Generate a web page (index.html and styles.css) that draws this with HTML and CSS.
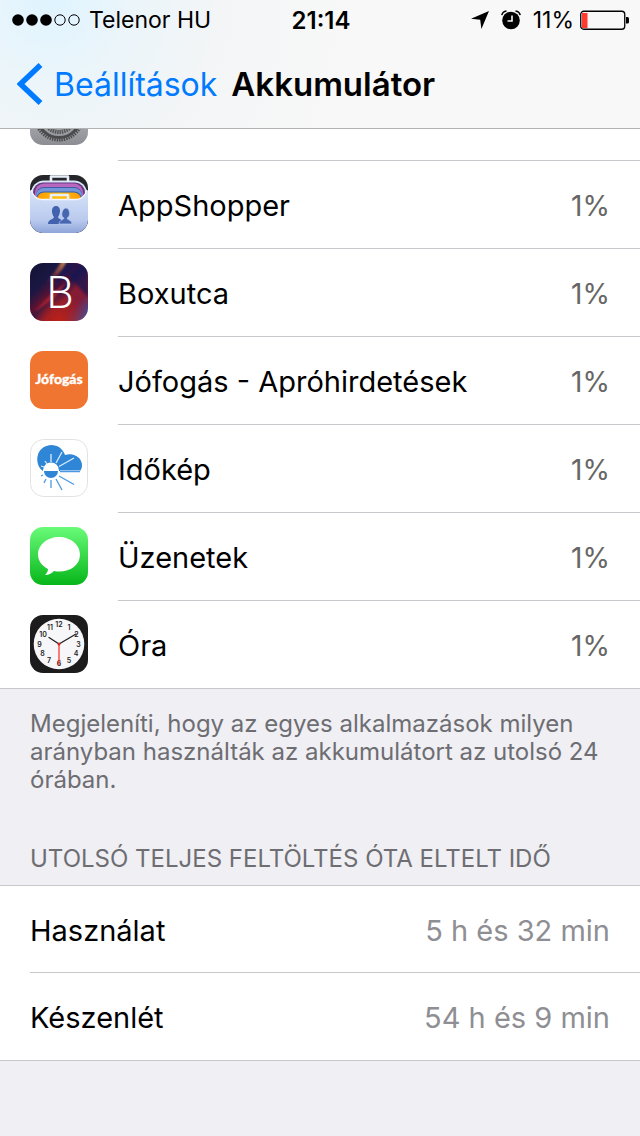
FILE: index.html
```html
<!DOCTYPE html>
<html lang="hu">
<head>
<meta charset="utf-8">
<meta name="viewport" content="width=device-width, initial-scale=1">
<title>Akkumulátor</title>
<link rel="stylesheet" href="styles.css">
</head>
<body>
<header class="top">
  <div class="status">
    <div class="status-left">
      <svg class="signal" width="68" height="12" viewBox="0 0 68 12" aria-hidden="true">
        <circle cx="6" cy="6" r="5.8"/><circle cx="20" cy="6" r="5.8"/><circle cx="34" cy="6" r="5.8"/>
        <g fill="none" stroke="#000"><circle cx="48" cy="6" r="5.200"/><circle cx="62" cy="6" r="5.200"/></g>
      </svg>
      <span>Telenor HU</span>
    </div>
    <time class="clock">21:14</time>
    <div class="status-right">
      <svg width="18" height="18" viewBox="0 0 18 18" aria-hidden="true"><path d="M18 0 10.4 18 9.2 8.8 0 7.8Z"/></svg>
      <svg class="alarm" width="20" height="20" viewBox="0 0 20 20" aria-hidden="true">
        <circle cx="10" cy="10.5" r="8.8"/>
        <path d="M.8 5.2Q1.500 1.500 5.500 1M19.200 5.200Q18.500 1.500 14.500 1" fill="none" stroke="#000" stroke-width="1.500"/>
        <path d="M11 5.500V11H6.500" fill="none" stroke="#f8f8f8" stroke-width="1.600"/>
      </svg>
      <span>11%</span>
      <svg class="battery" width="50" height="20" viewBox="0 0 50 20" aria-hidden="true">
        <rect x=".75" y="1.250" width="44" height="18" rx="3" fill="none" stroke="#000" stroke-width="1.300"/>
        <rect x="2" y="3" width="5.500" height="15" fill="#ff3b30"/>
        <path d="M46 7h1.500q1.500 0 1.500 1.500v3.500q0 1.500-1.500 1.500H46Z"/>
      </svg>
    </div>
  </div>
  <nav class="nav">
    <a class="back" href="#">
      <svg width="26" height="42" viewBox="0 0 26 42" aria-hidden="true"><path d="M23.500 2 3.500 21l20 19" fill="none" stroke="#007aff" stroke-width="5.500"/></svg>
      <span>Beállítások</span>
    </a>
    <h1 class="title">Akkumulátor</h1>
  </nav>
</header>
<main>
  <ul class="list apps">
    <li class="row clipped">
      <svg class="icon" viewBox="0 0 58 58" aria-hidden="true">
        <defs><linearGradient id="gs" x2="0" y2="1"><stop stop-color="#d5d6d9"/><stop offset=".7" stop-color="#a0a2a7"/><stop offset="1" stop-color="#8b8d93"/></linearGradient></defs>
        <rect width="58" height="58" rx="13" fill="url(#gs)"/>
        <circle cx="29" cy="29" r="24" fill="none" stroke="#4b4b4d" stroke-width="3" stroke-dasharray="1.400 1"/>
        <circle cx="29" cy="29" r="21.500" fill="none" stroke="#4b4b4d" stroke-width="3"/>
        <circle cx="29" cy="29" r="16" fill="none" stroke="#555659" stroke-width="4" stroke-dasharray="1.500 .8"/>
      </svg>
      <div class="cell"></div>
    </li>
    <li class="row">
      <svg class="icon" viewBox="0 0 58 58" aria-hidden="true">
        <defs>
          <linearGradient id="as" x2="0" y2="1"><stop stop-color="#d7e3f8"/><stop offset=".7" stop-color="#b9caee"/><stop offset="1" stop-color="#8fa5d9"/></linearGradient>
          <linearGradient id="ao"><stop stop-color="#ff9a05"/><stop offset=".5" stop-color="#ffc20a"/><stop offset="1" stop-color="#ff9a05"/></linearGradient>
          <clipPath id="ac"><rect width="58" height="58" rx="13"/></clipPath>
        </defs>
        <g clip-path="url(#ac)">
          <rect width="58" height="58" fill="#252629"/>
          <rect x="1" y="5.500" width="56" height="52" rx="13" fill="#d9e6f6"/>
          <rect x="3" y="7.500" width="52" height="30" rx="10" fill="#653783"/>
          <rect x="5" y="8.500" width="48" height="25" rx="9" fill="#b967bf"/>
          <rect x="6" y="12" width="46" height="20" rx="8" fill="#405da9"/>
          <rect x="6" y="13" width="46" height="20" rx="8" fill="#7595d9"/>
          <rect x="6" y="16.500" width="46" height="17" rx="8" fill="#315cab"/>
          <rect x="7" y="17.500" width="44" height="16" rx="7" fill="url(#ao)"/>
          <path d="M0 15 3 19Q6 24.500 12 24.500H46Q52 24.500 55 19L58 15V45a13 13 0 0 1-13 13H13A13 13 0 0 1 0 45Z" fill="url(#as)"/>
          <path d="M1 15 3 19Q6 24.500 12 24.500H46Q52 24.500 55 19L57 15" fill="none" stroke="#f3f7ff" stroke-width="1.400"/>
          <path d="M21 7V1.500h17V7M21 25v-5h17v5" fill="none" stroke="#e8effb" stroke-width="2.600" stroke-linejoin="round"/>
          <path d="M18 49c0-5 5-4 6-7-3-4-3-11 2-11s5 7 2 11c1 3 6 2 6 7Z" fill="#4262ae"/>
          <path d="M29 49c0-4 5-4 5-6-4-1-2-10 2-10s5 9 1 10c0 2 5 2 5 6Z" fill="#4867b1" stroke="#b9caee" stroke-width=".7"/>
        </g>
      </svg>
      <div class="cell"><span>AppShopper</span><span class="percent">1%</span></div>
    </li>
    <li class="row">
      <svg class="icon" viewBox="0 0 58 58" aria-hidden="true">
        <defs>
          <linearGradient id="bx" x2="1" y2="1"><stop stop-color="#151235"/><stop offset=".28" stop-color="#1a1743"/><stop offset=".43" stop-color="#5a1232"/><stop offset=".5" stop-color="#291646"/><stop offset=".62" stop-color="#861c32"/><stop offset=".75" stop-color="#811c3a"/><stop offset="1" stop-color="#355aad"/></linearGradient>
          <radialGradient id="br" cx=".5" cy="1" r=".5"><stop stop-color="#bb2116"/><stop offset="1" stop-color="#bb2116" stop-opacity="0"/></radialGradient>
          <linearGradient id="by" x1="1" x2="0" y2="1"><stop stop-color="#d99850"/><stop offset="1" stop-color="#a9233a" stop-opacity="0"/></linearGradient>
          <filter id="bb"><feGaussianBlur stdDeviation="1"/></filter>
          <clipPath id="bc"><rect width="58" height="58" rx="13"/></clipPath>
        </defs>
        <g clip-path="url(#bc)">
          <rect width="58" height="58" fill="url(#bx)"/>
          <path d="M34 0H58V34L38 12 22 28Z" fill="#151752" opacity=".75" filter="url(#bb)"/>
          <path d="M32-2h5Q29 15 14 21Q24 11 32-2" fill="url(#by)" filter="url(#bb)"/>
          <path d="M38 18 20 32 4 49 25 35Z" fill="#b32435" opacity=".8" filter="url(#bb)"/>
          <rect width="58" height="58" fill="url(#br)"/>
        </g>
        <text class="boxutca-mark" x="30" y="45" text-anchor="middle">B</text>
      </svg>
      <div class="cell"><span>Boxutca</span><span class="percent">1%</span></div>
    </li>
    <li class="row">
      <svg class="icon" viewBox="0 0 58 58" aria-hidden="true">
        <rect width="58" height="58" rx="13" fill="#f07530"/>
        <text class="jofogas-mark" x="29" y="33" text-anchor="middle">Jófogás</text>
      </svg>
      <div class="cell"><span>Jófogás - Apróhirdetések</span><span class="percent">1%</span></div>
    </li>
    <li class="row">
      <svg class="icon" viewBox="0 0 58 58" aria-hidden="true">
        <rect x=".5" y=".5" width="57" height="57" rx="13" fill="#fff" stroke="#e2e2e3"/>
        <path d="M13 32C4 26 5 7 21 6c7 0 12 4 14 10 9-3 17 3 17 10 0 3-1 5-2 6Z" fill="#2f86d6"/>
        <circle cx="21" cy="31.500" r="8" fill="#fff"/>
        <path d="M14 32h14a7 7 0 0 1-14 0Z" fill="#2f86d6"/>
        <g fill="none" stroke="#d7ecff" stroke-width="1.300"><path d="M21 15v8M32 13l-6 11M44 19 29 27.500M30 32h20M15 22l2 3M11 27l3 1"/></g>
        <g fill="none" stroke="#4b9ae0" stroke-width="1.300"><path d="M21 41v8M26 40l6 11M29 37l15 8.500M16 40l-2 4M13 36l-2 1M30 32.500h20"/></g>
      </svg>
      <div class="cell"><span>Időkép</span><span class="percent">1%</span></div>
    </li>
    <li class="row">
      <svg class="icon" viewBox="0 0 58 58" aria-hidden="true">
        <defs><linearGradient id="ms" x2="0" y2="1"><stop stop-color="#69fb79"/><stop offset="1" stop-color="#06b619"/></linearGradient></defs>
        <rect width="58" height="58" rx="13" fill="url(#ms)"/>
        <path d="M29 10C17 10 8 18 8 27.500c0 6 4 11.500 10 14.500 0 2-1 4-3 6 4 0 7-2 9-4 13 2.500 26-4 26-16.500C50 18 41 10 29 10Z" fill="#fff"/>
      </svg>
      <div class="cell"><span>Üzenetek</span><span class="percent">1%</span></div>
    </li>
    <li class="row last">
      <svg class="icon" viewBox="0 0 58 58" aria-hidden="true">
        <rect width="58" height="58" rx="13" fill="#1c1c1d"/>
        <circle cx="29" cy="29" r="25.300" fill="#f7f7fa"/>
        <g class="dial" text-anchor="middle">
          <text x="29" y="12">12</text><text x="39" y="15">1</text><text x="46.500" y="22">2</text><text x="48.500" y="31.500">3</text><text x="46" y="41">4</text><text x="39" y="48">5</text><text x="29" y="51">6</text><text x="19" y="48">7</text><text x="12.500" y="41">8</text><text x="9.500" y="31.500">9</text><text x="13" y="22">10</text><text x="20" y="15">11</text>
        </g>
        <path d="M19 22.500 29 29 46 19" fill="none" stroke="#222" stroke-width="1.300" stroke-linecap="round"/>
        <path d="M29 29v21" stroke="#ff382e" stroke-width="1.300"/><circle cx="29" cy="29" r="1.500" fill="#d8231d"/>
      </svg>
      <div class="cell"><span>Óra</span><span class="percent">1%</span></div>
    </li>
  </ul>
  <p class="note">Megjeleníti, hogy az egyes alkalmazások milyen arányban használták az akkumulátort az utolsó 24 órában.</p>
  <h2 class="section-title">Utolsó teljes feltöltés óta eltelt idő</h2>
  <ul class="list times">
    <li class="row"><div class="cell"><span>Használat</span><span class="value">5 h és 32 min</span></div></li>
    <li class="row last"><div class="cell"><span>Készenlét</span><span class="value">54 h és 9 min</span></div></li>
  </ul>
</main>
</body>
</html>
```
FILE: styles.css
```css
* { box-sizing: border-box; }
body {
  margin: 0;
  background: #efeff4;
  color: #000;
  font-family: Inter, "Liberation Sans", sans-serif;
}
svg { display: block; flex: none; }
.top {
  background: radial-gradient(circle at 50px 0, #dff4ff 0, #ebf5fa 80px, #f3f5f6 170px, #f8f8f8 300px);
  border-bottom: 1px solid #b2b2b2;
}
.status {
  display: grid;
  grid-template-columns: 1fr auto 1fr;
  align-items: center;
  height: 40px;
  padding: 0 10px 0 12px;
  font-size: 23px;
}
.status-left, .status-right { display: flex; align-items: center; }
.status-left { gap: 9px; }
.status-right { justify-content: flex-end; }
.alarm { margin: 0 12px; }
.battery { margin-left: 6px; }
.clock { font-size: 24px; font-weight: 600; }
.nav {
  display: flex;
  align-items: center;
  gap: 14px;
  height: 88px;
  padding-left: 17px;
}
.back {
  display: flex;
  align-items: center;
  gap: 11px;
  color: #007aff;
  font-size: 32px;
  text-decoration: none;
}
.title { margin: 0; font-size: 33px; font-weight: 600; }
.list {
  margin: 0;
  padding: 0;
  list-style: none;
  background: #fff;
  border-bottom: 1px solid #c8c7cc;
}
.row {
  display: flex;
  align-items: center;
  gap: 30px;
  height: 88px;
  padding-left: 30px;
}
.icon { width: 58px; height: 58px; margin-bottom: 2px; }
.cell {
  flex: 1;
  align-self: stretch;
  display: flex;
  align-items: center;
  justify-content: space-between;
  padding: 2px 30px 0 0;
  border-bottom: 1px solid #c8c7cc;
  font-size: 29px;
}
.clipped { height: 32px; align-items: flex-end; overflow: hidden; }
.clipped .icon { margin-bottom: 16px; }
.last { height: 87px; }
.last .cell { border-bottom: 0; }
.percent { color: #666; font-size: 28px; }
.value { color: #8e8e93; }
.note {
  margin: 0;
  padding: 21px 30px 0;
  color: #6d6d72;
  font-size: 24px;
  line-height: 28px;
}
.section-title {
  margin: 0;
  padding: 51px 30px 12px;
  color: #6d6d72;
  font-size: 24px;
  font-weight: 400;
  line-height: 28px;
  text-transform: uppercase;
}
.times { border-top: 1px solid #c8c7cc; }
.times .row { height: 87px; }
.boxutca-mark { fill: #fff; font-family: Roboto, sans-serif; font-size: 44px; font-weight: 300; }
.jofogas-mark { fill: #fff; stroke: #fff; stroke-width: 0.3px; font-family: Lato, sans-serif; font-size: 14px; font-weight: 900; }
.dial { fill: #222; font-size: 7px; font-weight: 600; }
```
